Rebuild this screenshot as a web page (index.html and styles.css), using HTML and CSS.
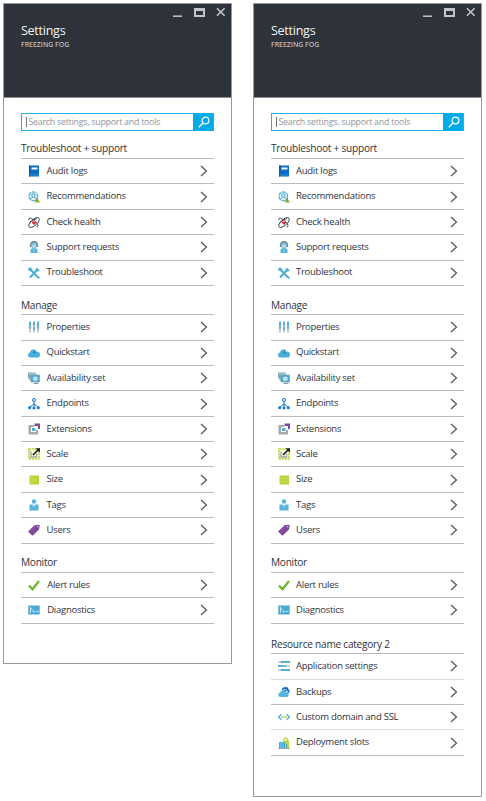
FILE: index.html
```
<!DOCTYPE html>
<html lang="en">
<head>
<meta charset="utf-8">
<title>Settings</title>
<link rel="stylesheet" href="styles.css">
</head>
<body>
<svg class="sprite" aria-hidden="true">
  <symbol id="chevron" viewBox="0 0 8 12"><path d="M1 1l5.500 5L1 11" fill="none" stroke="#50545b" stroke-width="1.200"/></symbol>
  <symbol id="search" viewBox="0 0 14 14"><circle cx="8.500" cy="5.500" r="3.400" fill="none" stroke="#fff" stroke-width="1.200"/><path d="M6 8L1.800 12.300" stroke="#fff" stroke-width="1.500"/></symbol>
  <symbol id="controls" viewBox="0 0 56 12"><path d="M1 10.200h9" stroke="#c4c5c8" stroke-width="1.500"/><path d="M22 2h11v9H22zM24 5v4h7V5z" fill="#c4c5c8" fill-rule="evenodd"/><path d="M45 2.200l7.600 7.600M52.600 2.200L45 9.800" stroke="#c4c5c8" stroke-width="1.600"/></symbol>
  <symbol id="audit" viewBox="0 0 12 12"><path d="M1 .5h10v11H1z" fill="#0b6cc4"/><path d="M1 .5h1.500v11H1z" fill="#1757a0"/><path d="M3.500 2.500h6v2h-6z" fill="#fff"/><path d="M2 10h9" stroke="#4f9ddd" stroke-width=".6"/></symbol>
  <symbol id="recommend" viewBox="0 0 12 12"><circle cx="5.300" cy="5.300" r="4.400" fill="#e3f4fb" stroke="#59b4d9" stroke-width="1.300" stroke-dasharray="4 .7"/><circle cx="5.300" cy="4.500" r="1.700" fill="none" stroke="#3fa0cb"/><path d="M2.500 8.500l2-2M6.500 6l2 2" stroke="#3fa0cb"/><path d="M9 6.500l3 5H6.500z" fill="#9bb52f"/><path d="M9 8v2" stroke="#666" stroke-width=".8"/></symbol>
  <symbol id="health" viewBox="0 0 12 12"><g fill="none" stroke="#40434b" stroke-width=".9"><ellipse cx="6" cy="6.500" rx="6.600" ry="3" transform="rotate(-42 6 6.500)"/><path d="M.7 4Q.5 1.700 2.500 2q5 1.500 7.500 7 .5 2.200-1.500 2M.8 8.500Q3 4 9 2.500"/></g><path d="M6 9L3.900 6.700q-.4-1.800 1.200-1.500l.9.700.9-.7q1.600-.3 1.200 1.500z" fill="#e52431"/></symbol>
  <symbol id="support" viewBox="0 0 12 12"><path d="M2.500 12V8.500Q3 7 6 7t3.500 1.500V12z" fill="#59b4d9"/><circle cx="6" cy="4" r="3.200" fill="#83b5cb"/><path d="M2.500 6V3.500Q3 .5 6 .5t3.500 3V6" fill="none" stroke="#6d8795" stroke-width="1.300"/><path d="M4.500 3.500h3v3h-3z" fill="#b9e1f1"/><path d="M6 8v3" stroke="#8dcbe4"/></symbol>
  <symbol id="tools" viewBox="0 0 12 12"><path d="M2 2l7.500 8M10 2L2 10.500" stroke="#4caed6" stroke-width="1.900"/><path d="M.5 1L3 .5 4.500 3 3 4.500 0 3zM8 1.500L9.500.5l-.2 2 2 .2.500-1Q12 4.500 9 4.500L7.500 3.500zM8 9l1-1 3 2.500L10.700 12z" fill="#4caed6"/></symbol>
  <symbol id="properties" viewBox="0 0 12 12"><path d="M2 1v10.500M6 1v10.500M10 1v10.500" stroke="#9ba9b0" stroke-width="1.200"/><path d="M2 .5v6M6 .5v3M6 6v3M10 .5v6" stroke="#55b3d8" stroke-width="1.900"/><path d="M.5 7h3M4.500 4h3M8.500 7h3" stroke="#8ba4ae"/></symbol>
  <symbol id="cloud" viewBox="0 0 12 12"><path d="M2.500 10.500Q0 10.500 0 8q0-2.200 2-2.500Q2.500 2.500 5.500 2.500q2.300 0 3 2 3.500 0 3.500 3.200 0 2.800-2.500 2.800z" fill="#4bb0d9"/><path d="M6.500 2.500v4M5 5l1.500 1.700L8 5" stroke="#2f8ebd" fill="none"/></symbol>
  <symbol id="availability" viewBox="0 0 12 12"><path d="M0 .5h7.500v6H0zM1.500 2.500H9v6H1.500z" fill="#86a9b8"/><path d="M3 3h8.500v7H3z" fill="#4ba9d1" stroke="#8aa0ab" stroke-width=".7"/><path d="M1 1.500h5.500v1H1z" fill="#9bd3e9"/><path d="M7.300 4.300l2.400 1v2.700l-2.400 1.200-2.400-1.200V5.300z" fill="#b7e4f5"/><path d="M5.500 11.500h5M8 10v1.500" stroke="#8aa0ab"/></symbol>
  <symbol id="endpoints" viewBox="0 0 12 12"><path d="M6 3v6M6 6L2 9M6 6l4 3" stroke="#1875c5" fill="none"/><circle cx="6" cy="2" r="1.500" fill="#fff" stroke="#1875c5"/><circle cx="1.700" cy="9.700" r="1.600" fill="#2380cc"/><circle cx="6" cy="10" r="1.600" fill="#2380cc"/><circle cx="10.300" cy="9.700" r="1.600" fill="#2380cc"/></symbol>
  <symbol id="extensions" viewBox="0 0 12 12"><path d="M.5 2h5.500v2H3v5h5V7h2v4.500H.5z" fill="#a3aab0"/><path d="M6.500.5h5.500v5.500h-2V3H6.500z" fill="#804998"/><path d="M4 5h3.500v3H4z" fill="#49b1d9"/></symbol>
  <symbol id="scale" viewBox="0 0 12 12"><path d="M1 1h10v10H1z" fill="#f6f9df" stroke="#b8d432" stroke-width="1.700" stroke-dasharray="2 .8"/><path d="M3 3.500v5.500h5.500V6" fill="none" stroke="#9ba6ad" stroke-width="1.300"/><path d="M5 7L10 2" stroke="#222" stroke-width="1.700"/><path d="M7.500.3H12V4.800z" fill="#222"/></symbol>
  <symbol id="size" viewBox="0 0 12 12"><path d="M1.500 1.500H11v9H1.500z" fill="#b8d432"/><path d="M1.500 4.500H11M1.500 7.500H11M4 1.500v9" stroke="#d0e375" stroke-width=".6"/></symbol>
  <symbol id="person" viewBox="0 0 12 12"><circle cx="6" cy="2.500" r="2.200" fill="#59b4d9"/><path d="M1.500 5.500h3L6 7.500l1.500-2h3v6h-9z" fill="#59b4d9"/><path d="M4.500 5.500h3L6 8z" fill="#b8e2f2"/></symbol>
  <symbol id="tag" viewBox="0 0 12 12"><path d="M.5 7L6.500 1.300 11 .8q.8 0 .7 1L11 5.500 5 11.200q-.7.5-1.200 0L.5 8q-.4-.5 0-1z" fill="#804998"/><circle cx="9.700" cy="2.800" r=".8" fill="#d9bfe3"/><path d="M2.500 7.500l5-4.700" stroke="#9362a9"/></symbol>
  <symbol id="check" viewBox="0 0 12 12"><path d="M1 6.500l3.500 3.800L11 2" fill="none" stroke="#67b72c" stroke-width="2.200"/></symbol>
  <symbol id="diagnostics" viewBox="0 0 12 12"><path d="M.3 1.500h11.400v9H.3z" fill="#4baad5"/><path d="M2.500 3v6M2.500 4l3 3v1.500M6.500 7.500h1.200M8.500 7.500h2" fill="none" stroke="#d5effa" stroke-width=".9"/></symbol>
  <symbol id="appsettings" viewBox="0 0 12 12"><path d="M0 2h12M0 6h12M0 10h12" stroke="#9ba9b0" stroke-width="1.200"/><path d="M4 2h8M0 6h6M4 10h8" stroke="#55b3d8" stroke-width="1.900"/><path d="M3.500.9v2.200M7.500 4.900v2.200M3.500 8.900v2.200" stroke="#8399a4" stroke-width="1.200"/></symbol>
  <symbol id="backups" viewBox="0 0 12 12"><path d="M4 4q0-3 3-2.700 3-.8 3.500 2 1.500.7 1 2.700L10 7.500z" fill="#1267b8"/><path d="M2.500 11Q.2 11 .3 8.800 0 7 2.200 6.500 3 3.800 5.300 4.200q2.400 0 2.900 2.300 2.600.2 2.600 2.300 0 2.200-2.300 2.200z" fill="#55b5dc"/><path d="M5 4q2-2 4 .5v2M7.700 5.200L9 6.500l1.300-1.700" stroke="#d2effa" stroke-width=".8" fill="none"/></symbol>
  <symbol id="domain" viewBox="0 0 12 12"><path d="M3.300 3.200L.6 6l2.700 2.800M8.700 3.200L11.400 6 8.700 8.800" fill="none" stroke="#4bb0d9" stroke-width="1.300"/><path d="M3.300 6h5.600" stroke="#83b82b" stroke-width="1.300" stroke-dasharray="1.200 .9"/></symbol>
  <symbol id="slots" viewBox="0 0 12 12"><path d="M5 3.500h6V11H5z" fill="#b8d432"/><path d="M6 4V2.500Q6 .8 7.700.8t1.700 1.700V4" fill="none" stroke="#b8d432" stroke-width="1.200"/><path d="M1 5h6v6.500H1z" fill="#3faad7"/><path d="M3 5v6M5 5v6" stroke="#a7def4" stroke-width=".6"/><path d="M8.500 7v4" stroke="#65a59b"/><path d="M0 11.500h12" stroke="#9daab0"/></symbol>
</svg>
<main class="board">
  <section class="blade blade-short">
    <header class="head"><svg class="controls"><use href="#controls"/></svg><h1>Settings</h1><p>FREEZING FOG</p></header>
    <div class="search"><span class="caret"></span><span class="hint">Search settings, support and tools</span><span class="go"><svg><use href="#search"/></svg></span></div>
    <h2 class="first">Troubleshoot + support</h2>
    <ul>
      <li><svg class="icon"><use href="#audit"/></svg><span>Audit logs</span><svg class="chev"><use href="#chevron"/></svg></li>
      <li><svg class="icon"><use href="#recommend"/></svg><span>Recommendations</span><svg class="chev"><use href="#chevron"/></svg></li>
      <li><svg class="icon"><use href="#health"/></svg><span>Check health</span><svg class="chev"><use href="#chevron"/></svg></li>
      <li><svg class="icon"><use href="#support"/></svg><span>Support requests</span><svg class="chev"><use href="#chevron"/></svg></li>
      <li><svg class="icon"><use href="#tools"/></svg><span>Troubleshoot</span><svg class="chev"><use href="#chevron"/></svg></li>
    </ul>
    <h2>Manage</h2>
    <ul>
      <li><svg class="icon"><use href="#properties"/></svg><span>Properties</span><svg class="chev"><use href="#chevron"/></svg></li>
      <li><svg class="icon"><use href="#cloud"/></svg><span>Quickstart</span><svg class="chev"><use href="#chevron"/></svg></li>
      <li><svg class="icon"><use href="#availability"/></svg><span>Availability set</span><svg class="chev"><use href="#chevron"/></svg></li>
      <li><svg class="icon"><use href="#endpoints"/></svg><span>Endpoints</span><svg class="chev"><use href="#chevron"/></svg></li>
      <li><svg class="icon"><use href="#extensions"/></svg><span>Extensions</span><svg class="chev"><use href="#chevron"/></svg></li>
      <li><svg class="icon"><use href="#scale"/></svg><span>Scale</span><svg class="chev"><use href="#chevron"/></svg></li>
      <li><svg class="icon"><use href="#size"/></svg><span>Size</span><svg class="chev"><use href="#chevron"/></svg></li>
      <li><svg class="icon"><use href="#person"/></svg><span>Tags</span><svg class="chev"><use href="#chevron"/></svg></li>
      <li><svg class="icon"><use href="#tag"/></svg><span>Users</span><svg class="chev"><use href="#chevron"/></svg></li>
    </ul>
    <h2 class="monitor">Monitor</h2>
    <ul class="monitor-list">
      <li><svg class="icon"><use href="#check"/></svg><span>Alert rules</span><svg class="chev"><use href="#chevron"/></svg></li>
      <li><svg class="icon"><use href="#diagnostics"/></svg><span>Diagnostics</span><svg class="chev"><use href="#chevron"/></svg></li>
    </ul>
  </section>
  <section class="blade blade-tall">
    <header class="head"><svg class="controls"><use href="#controls"/></svg><h1>Settings</h1><p>FREEZING FOG</p></header>
    <div class="search"><span class="caret"></span><span class="hint">Search settings, support and tools</span><span class="go"><svg><use href="#search"/></svg></span></div>
    <h2 class="first">Troubleshoot + support</h2>
    <ul>
      <li><svg class="icon"><use href="#audit"/></svg><span>Audit logs</span><svg class="chev"><use href="#chevron"/></svg></li>
      <li><svg class="icon"><use href="#recommend"/></svg><span>Recommendations</span><svg class="chev"><use href="#chevron"/></svg></li>
      <li><svg class="icon"><use href="#health"/></svg><span>Check health</span><svg class="chev"><use href="#chevron"/></svg></li>
      <li><svg class="icon"><use href="#support"/></svg><span>Support requests</span><svg class="chev"><use href="#chevron"/></svg></li>
      <li><svg class="icon"><use href="#tools"/></svg><span>Troubleshoot</span><svg class="chev"><use href="#chevron"/></svg></li>
    </ul>
    <h2>Manage</h2>
    <ul>
      <li><svg class="icon"><use href="#properties"/></svg><span>Properties</span><svg class="chev"><use href="#chevron"/></svg></li>
      <li><svg class="icon"><use href="#cloud"/></svg><span>Quickstart</span><svg class="chev"><use href="#chevron"/></svg></li>
      <li><svg class="icon"><use href="#availability"/></svg><span>Availability set</span><svg class="chev"><use href="#chevron"/></svg></li>
      <li><svg class="icon"><use href="#endpoints"/></svg><span>Endpoints</span><svg class="chev"><use href="#chevron"/></svg></li>
      <li><svg class="icon"><use href="#extensions"/></svg><span>Extensions</span><svg class="chev"><use href="#chevron"/></svg></li>
      <li><svg class="icon"><use href="#scale"/></svg><span>Scale</span><svg class="chev"><use href="#chevron"/></svg></li>
      <li><svg class="icon"><use href="#size"/></svg><span>Size</span><svg class="chev"><use href="#chevron"/></svg></li>
      <li><svg class="icon"><use href="#person"/></svg><span>Tags</span><svg class="chev"><use href="#chevron"/></svg></li>
      <li><svg class="icon"><use href="#tag"/></svg><span>Users</span><svg class="chev"><use href="#chevron"/></svg></li>
    </ul>
    <h2 class="monitor">Monitor</h2>
    <ul class="monitor-list">
      <li><svg class="icon"><use href="#check"/></svg><span>Alert rules</span><svg class="chev"><use href="#chevron"/></svg></li>
      <li><svg class="icon"><use href="#diagnostics"/></svg><span>Diagnostics</span><svg class="chev"><use href="#chevron"/></svg></li>
    </ul>
    <h2 class="last">Resource name category 2</h2>
    <ul>
      <li class="faint"><svg class="icon"><use href="#appsettings"/></svg><span>Application settings</span><svg class="chev"><use href="#chevron"/></svg></li>
      <li><svg class="icon"><use href="#backups"/></svg><span>Backups</span><svg class="chev"><use href="#chevron"/></svg></li>
      <li class="faint"><svg class="icon"><use href="#domain"/></svg><span>Custom domain and SSL</span><svg class="chev"><use href="#chevron"/></svg></li>
      <li><svg class="icon"><use href="#slots"/></svg><span>Deployment slots</span><svg class="chev"><use href="#chevron"/></svg></li>
    </ul>
  </section>
</main>
</body>
</html>
```
FILE: styles.css
```
* { box-sizing: border-box; }
body { margin: 0; background: #fff; font-family: "Open Sans", "Noto Sans", sans-serif; color: #30343c; }
h1, h2, p, ul { margin: 0; padding: 0; font-weight: 400; }
.sprite { display: none; }
.board { display: flex; align-items: flex-start; gap: 21px; padding: 3px 0 0 3px; }
.blade { width: 229px; border: 1px solid #999; padding-bottom: 10px; }
.blade-short { height: 661px; }
.blade-tall { height: 794px; }
.head { height: 94px; background: #2e323a; border-bottom: 1px solid #8b8d91; padding: 2px 3.500px 0 17px; display: flex; flex-direction: column; }
.controls { width: 56px; height: 12px; align-self: flex-end; }
.head h1 { font-size: 12.500px; letter-spacing: -.25px; line-height: 18px; margin-top: 4px; color: #f3f3f4; }
.head p { font-size: 7px; font-weight: 600; letter-spacing: -.05px; line-height: 9px; color: #b9bbbf; }
.search { display: flex; align-items: center; height: 18px; margin: 15px 17px 0; border: 1px solid #1cb0ee; padding-left: 4px; }
.caret { width: 1px; height: 10px; background: #777; margin-right: 1.500px; }
.hint { flex: 1; font-size: 8.800px; letter-spacing: -.23px; line-height: 16px; color: #929599; white-space: nowrap; }
.go { width: 20px; height: 18px; background: #00abec; display: flex; align-items: center; justify-content: center; }
.go svg { width: 14px; height: 14px; margin-left: 1px; }
h2 { margin: 0 17px; height: 29.200px; padding-top: 11px; font-size: 10.100px; letter-spacing: -.24px; line-height: 16px; border-bottom: 1px solid #bcbcbc; white-space: nowrap; }
h2.first { height: 28px; padding-top: 9px; }
h2.monitor { padding-top: 10.500px; }
h2.last { height: 30.600px; padding-top: 12.500px; }
ul { list-style: none; margin: 0 17px; }
li { display: flex; align-items: center; height: 25.400px; border-bottom: 1px solid #bcbcbc; padding: 0 6px 0 6.500px; font-size: 9.500px; letter-spacing: -.26px; line-height: 16px; white-space: nowrap; }
li.faint { border-bottom-color: #dcdcdc; }
li span { flex: 1; margin-left: 7px; padding-bottom: .6px; }
.monitor-list span { margin-left: 7.700px; }
.blade-tall li span { margin-left: 6.500px; }
.icon { width: 12px; height: 12px; }
.chev { width: 8px; height: 12px; }
```
